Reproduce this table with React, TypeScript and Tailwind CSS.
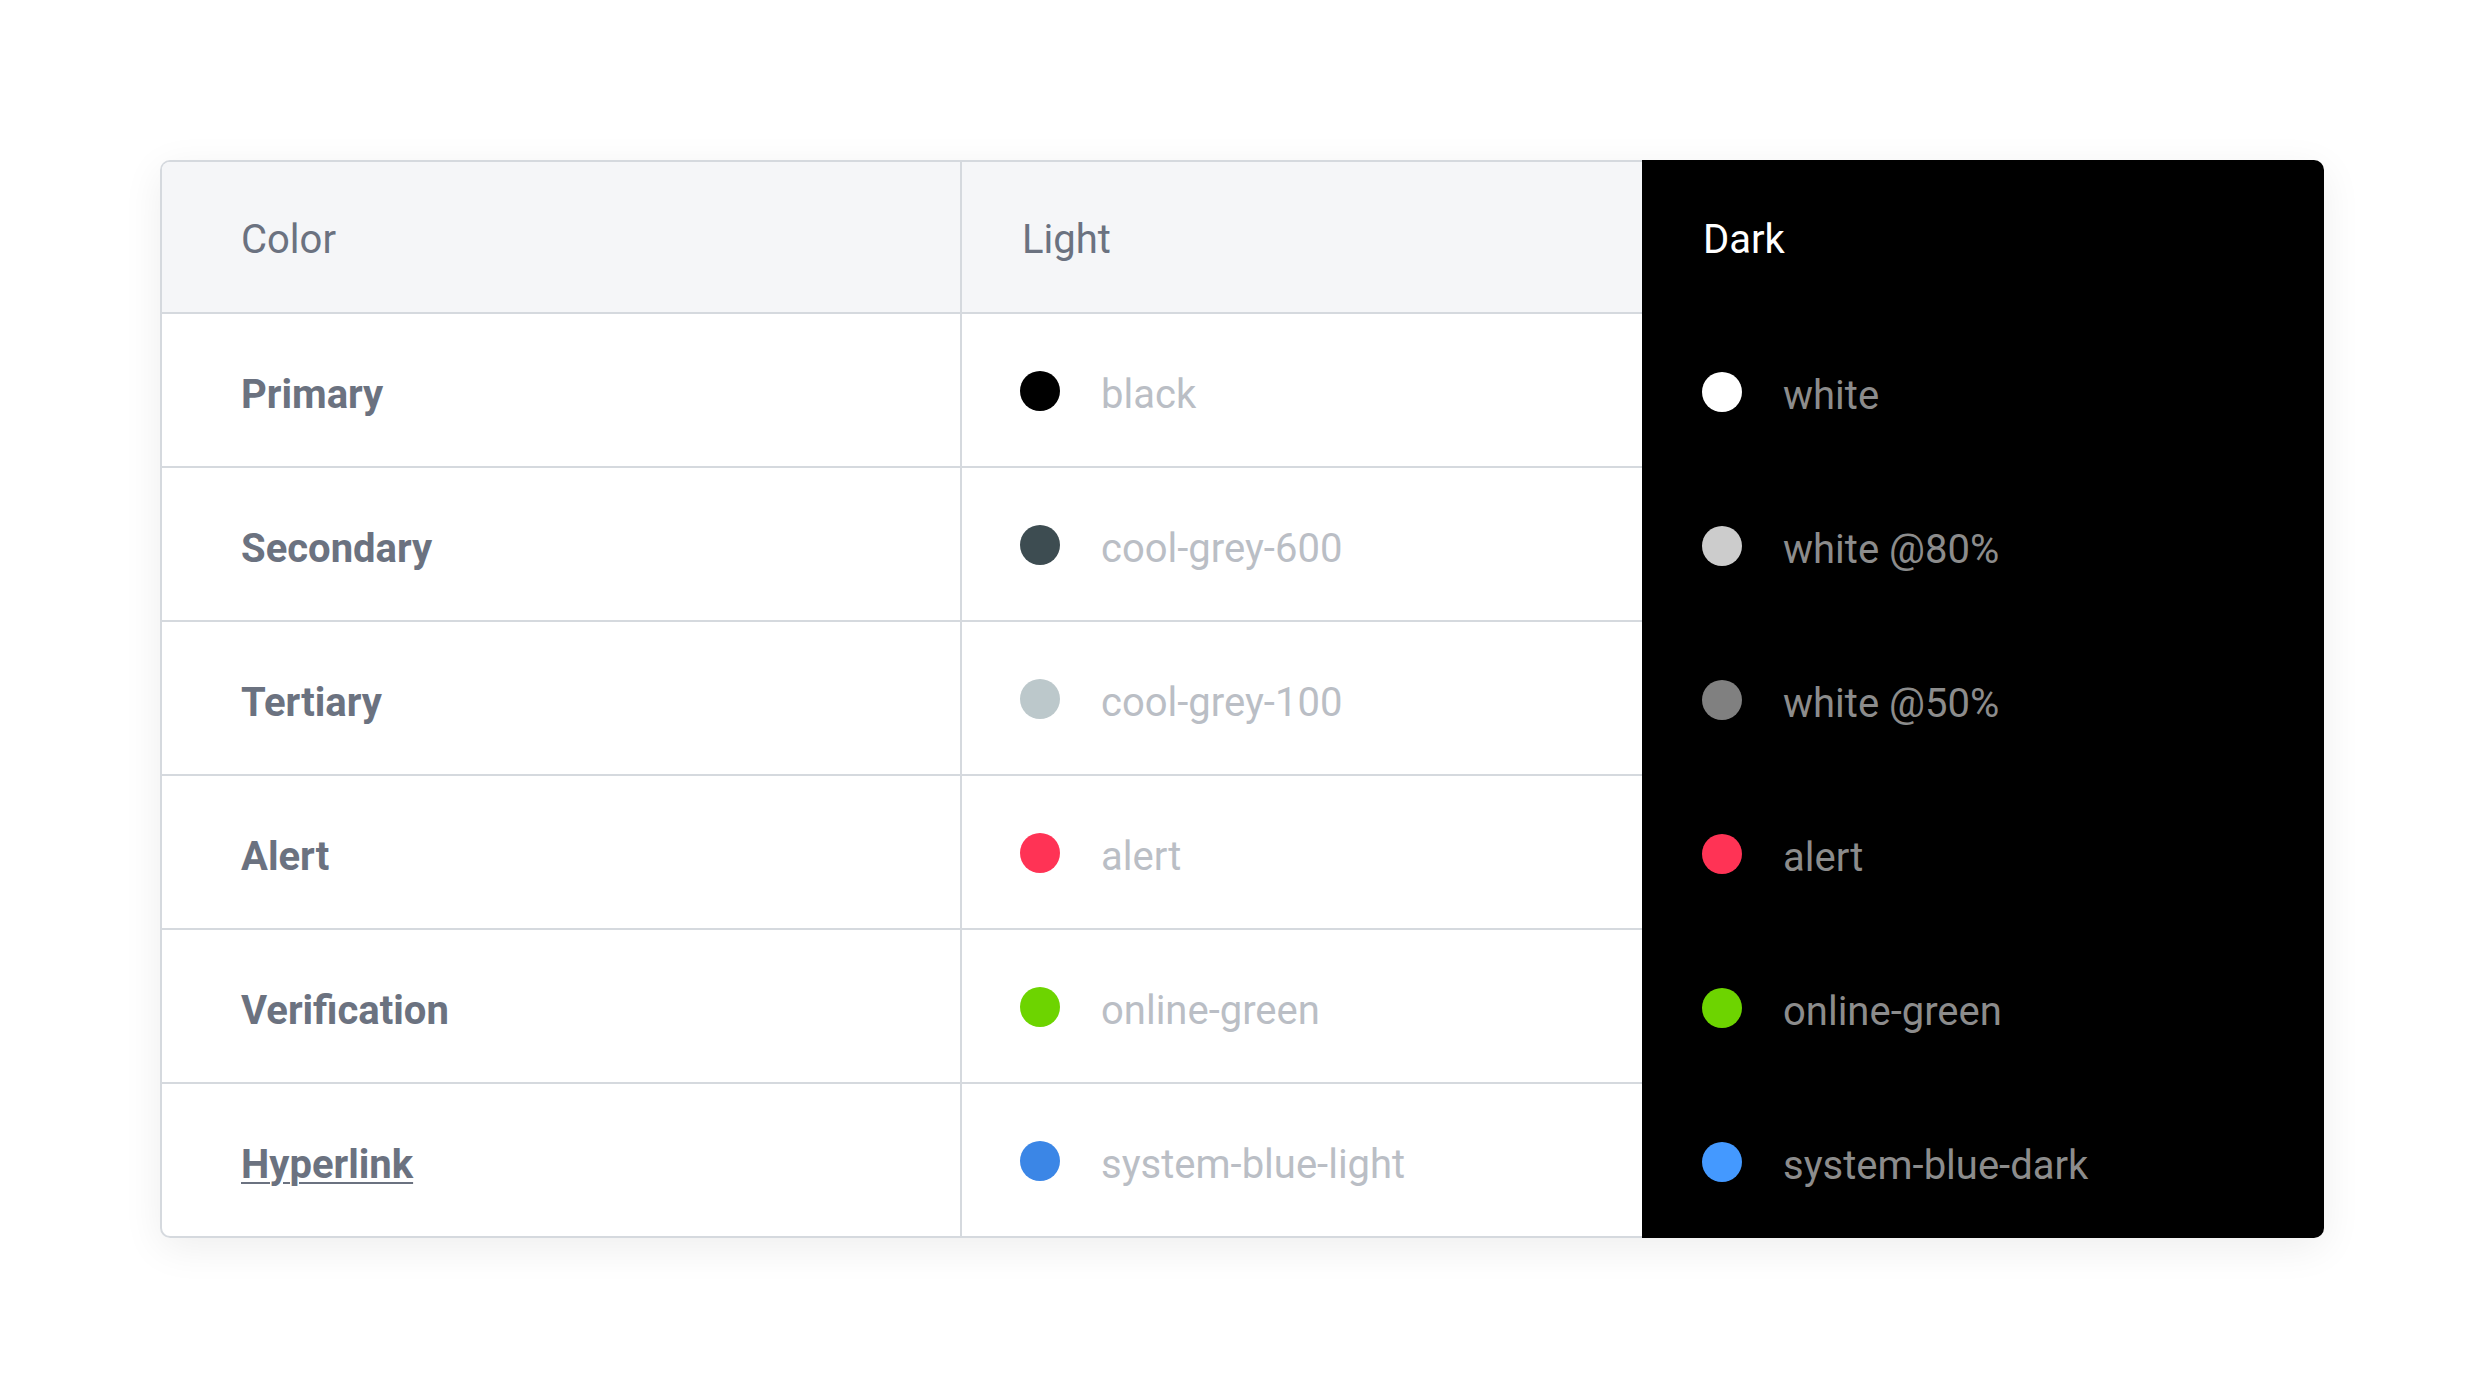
const rows = [
  { label: 'Primary', light: ['#000000', 'black'], dark: ['#ffffff', 'white'] },
  { label: 'Secondary', light: ['#3d4c51', 'cool-grey-600'], dark: ['#cccccc', 'white @80%'] },
  { label: 'Tertiary', light: ['#bcc8cb', 'cool-grey-100'], dark: ['#808080', 'white @50%'] },
  { label: 'Alert', light: ['#ff3355', 'alert'], dark: ['#ff3355', 'alert'] },
  { label: 'Verification', light: ['#6dd400', 'online-green'], dark: ['#6dd400', 'online-green'] },
  { label: 'Hyperlink', light: ['#3b86e6', 'system-blue-light'], dark: ['#4499ff', 'system-blue-dark'], link: true },
];

const Swatch = ({ color, name, dark }: { color: string; name: string; dark?: boolean }) => (
  <div className="flex items-center gap-[41px]">
    <span className="w-10 h-10 rounded-full shrink-0" style={{ backgroundColor: color }} />
    <span className={dark ? 'pt-[7px] text-[#8c8c8c]' : 'pt-[7px] text-[#babec5]'}>{name}</span>
  </div>
);

export default function App() {
  return (
    <div className="min-h-screen bg-white pt-[160px] font-['Roboto',sans-serif] text-[40px] leading-none">
      <div className="mx-auto w-[2164px] flex rounded-[10px] shadow-[0_10px_40px_rgba(0,0,0,0.07)]">
        {/* light columns */}
        <div className="flex-1 border-y-2 border-l-2 border-[#d5d9de] rounded-l-[10px] overflow-hidden">
          <div className="grid grid-cols-[798px_1fr] h-[152px] bg-[#f5f6f8] border-b-2 border-[#d5d9de] text-[#6b7280]">
            <div className="flex items-center pl-[79px] pt-[5px]">Color</div>
            <div className="flex items-center pl-[60px] pt-[5px] border-l-2 border-[#d5d9de]">Light</div>
          </div>
          {rows.map((r, i) => (
            <div
              key={r.label}
              className={
                i === rows.length - 1
                  ? 'grid grid-cols-[798px_1fr] h-[152px]'
                  : 'grid grid-cols-[798px_1fr] h-[154px] border-b-2 border-[#d5d9de]'
              }
            >
              <div className="flex items-center pl-[79px] pt-[9px] font-bold text-[#6b7280]">
                <span className={r.link ? 'underline decoration-2 underline-offset-[4px]' : ''}>{r.label}</span>
              </div>
              <div className="flex items-center pl-[58px] pt-[2px] border-l-2 border-[#d5d9de]">
                <Swatch color={r.light[0]} name={r.light[1]} />
              </div>
            </div>
          ))}
        </div>

        {/* dark column */}
        <div className="w-[682px] bg-black rounded-r-[10px]">
          <div className="h-[154px] flex items-center pl-[61px] pt-[5px] text-white">Dark</div>
          {rows.map((r) => (
            <div key={r.label} className="h-[154px] flex items-center pl-[60px] pt-[2px]">
              <Swatch color={r.dark[0]} name={r.dark[1]} dark />
            </div>
          ))}
        </div>
      </div>
    </div>
  );
}
